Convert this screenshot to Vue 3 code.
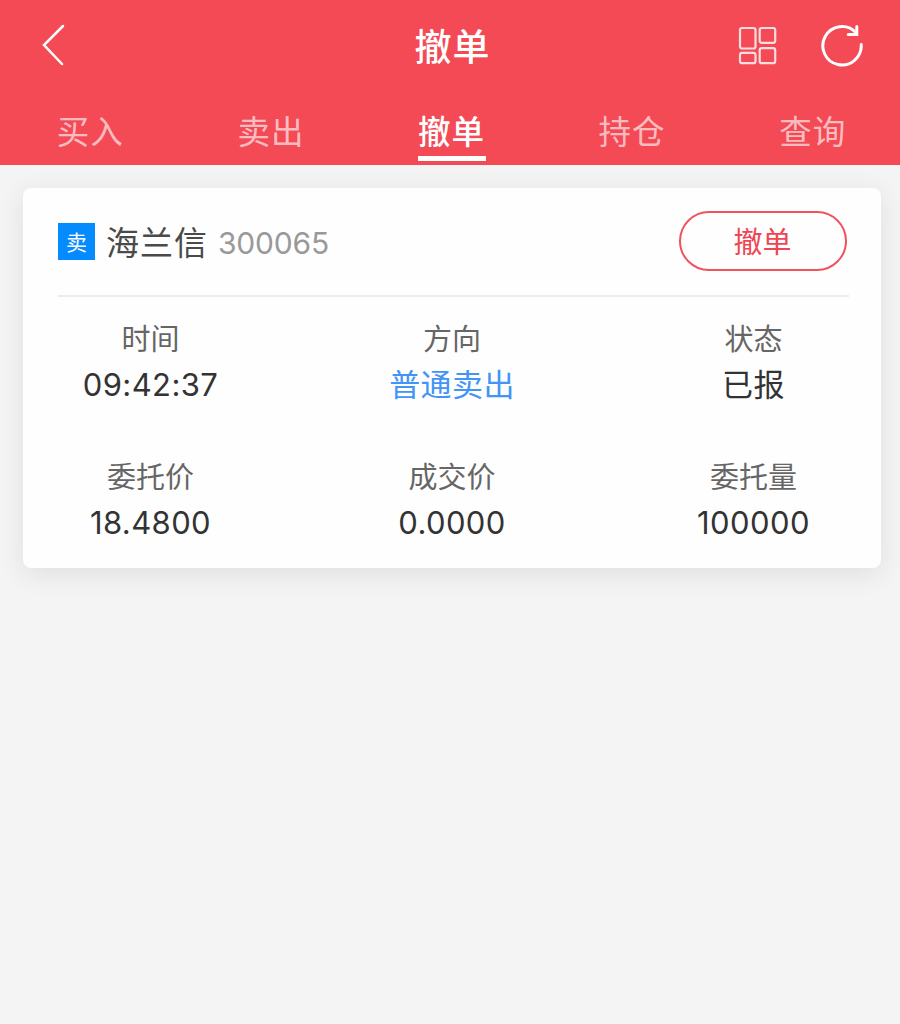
<template>
  <div class="trade-page">
    <header class="page-header">
      <div class="title-bar">
        <button class="icon-btn back" aria-label="返回">
          <svg width="24" height="42" viewBox="0 0 24 42">
            <path d="M22 2 L3 21 L21 40" />
          </svg>
        </button>
        <h1 class="title">撤单</h1>
        <div class="actions">
          <button class="icon-btn grid" aria-label="菜单">
            <svg width="40" height="40" viewBox="0 0 40 40">
              <rect x="2" y="3" width="15.5" height="20.5" rx="2" />
              <rect x="21.7" y="3" width="15.5" height="14.8" rx="2" />
              <rect x="2" y="27.8" width="15.5" height="10.4" rx="2" />
              <rect x="21.7" y="23.2" width="15.5" height="15" rx="2" />
            </svg>
          </button>
          <button class="icon-btn refresh" aria-label="刷新">
            <svg width="44" height="44" viewBox="0 0 44 44">
              <path d="M41.2 21.5 A19.2 19.2 0 1 1 35.6 9.2" />
              <path d="M36.8 3.5 V11.5 H28.2" />
            </svg>
          </button>
        </div>
      </div>

      <nav class="tabs">
        <a
          v-for="tab in tabs"
          :key="tab.id"
          class="tab"
          :class="{ active: activeTab === tab.id }"
          @click="activeTab = tab.id"
        >
          <span class="tab-text">{{ tab.name }}</span>
        </a>
      </nav>
    </header>

    <main class="content">
      <section v-for="order in orders" :key="order.code" class="order-card">
        <div class="order-head">
          <span class="badge">{{ order.side }}</span>
          <span class="stock-name">{{ order.name }}</span>
          <span class="stock-code">{{ order.code }}</span>
          <button class="cancel-btn">撤单</button>
        </div>
        <div class="order-fields">
          <div v-for="field in order.fields" :key="field.label" class="field">
            <span class="label">{{ field.label }}</span>
            <span class="value" :class="{ sell: field.sell }">{{ field.value }}</span>
          </div>
        </div>
      </section>
    </main>
  </div>
</template>

<script setup>
import { ref } from 'vue';

const activeTab = ref('cancel');

const tabs = [
  { id: 'buy', name: '买入' },
  { id: 'sell', name: '卖出' },
  { id: 'cancel', name: '撤单' },
  { id: 'position', name: '持仓' },
  { id: 'query', name: '查询' }
];

const orders = [
  {
    side: '卖',
    name: '海兰信',
    code: '300065',
    fields: [
      { label: '时间', value: '09:42:37' },
      { label: '方向', value: '普通卖出', sell: true },
      { label: '状态', value: '已报' },
      { label: '委托价', value: '18.4800' },
      { label: '成交价', value: '0.0000' },
      { label: '委托量', value: '100000' }
    ]
  }
];
</script>

<style>
body {
  background-color: #f4f4f4;
}
</style>

<style scoped>
.trade-page {
  min-height: 1024px;
  background-color: #f4f4f4;
  font-family: Inter, "Noto Sans CJK SC", sans-serif;
}

.page-header {
  height: 165px;
  background-color: #f34a56;
  color: #fff;
}

.title-bar {
  display: grid;
  grid-template-columns: 1fr auto 1fr;
  align-items: center;
  height: 90px;
  padding: 0 36px 0 41px;
}

.title {
  margin: 0;
  padding-top: 6px;
  font-size: 37px;
  line-height: 54px;
  font-weight: 500;
  letter-spacing: 1px;
}

.actions {
  display: flex;
  justify-content: flex-end;
  align-items: center;
  gap: 42px;
}

.icon-btn {
  padding: 0;
  border: none;
  background: none;
}

.icon-btn svg {
  display: block;
  fill: none;
  stroke: #fff;
  stroke-linecap: round;
}

.back {
  justify-self: start;
}

.back svg {
  stroke-width: 2.5;
}

.grid svg {
  stroke-width: 2.2;
  opacity: 0.82;
}

.refresh svg {
  stroke-width: 3;
}

.tabs {
  display: flex;
  height: 75px;
  margin: 0 -3px 0 0;
}

.tab {
  flex: 1;
  display: flex;
  justify-content: center;
  color: rgba(255, 255, 255, 0.65);
  cursor: pointer;
}

.tab-text {
  height: 66px;
  font-size: 32.5px;
  line-height: 86px;
  letter-spacing: 1px;
}

.tab.active .tab-text {
  padding-right: 1px;
  margin-left: 1px;
  border-bottom: 5px solid #fff;
  color: #fff;
  font-weight: 500;
}

.content {
  padding: 23px 19px 0 23px;
}

.order-card {
  height: 380px;
  box-sizing: border-box;
  padding: 0 32px 0 35px;
  border-radius: 8px;
  background-color: #fefefe;
  box-shadow: 0 6px 28px rgba(0, 0, 0, 0.09);
}

.order-head {
  display: flex;
  align-items: center;
  height: 106px;
  padding-top: 1px;
  border-bottom: 2px solid #ececec;
}

.badge {
  width: 37px;
  height: 37px;
  margin-bottom: 1px;
  background-color: #038bff;
  color: #fff;
  font-size: 21px;
  line-height: 39px;
  text-align: center;
}

.stock-name {
  margin: 0 0 3px 11px;
  color: #4a4a4a;
  font-size: 33px;
  letter-spacing: 1px;
}

.stock-code {
  margin: 2px 0 0 10px;
  color: #999;
  font-size: 30px;
  letter-spacing: -0.2px;
}

.cancel-btn {
  width: 168px;
  height: 60px;
  margin: 0 2px 2px auto;
  padding: 0 1px 2px 0;
  border: 2px solid #f0525e;
  border-radius: 30px;
  background: none;
  color: #ee4653;
  font-family: inherit;
  font-size: 29px;
}

.order-fields {
  display: grid;
  grid-template-columns: 185px 1fr 185px;
  row-gap: 49px;
  padding: 20px 3px 0 0;
}

.field {
  display: flex;
  flex-direction: column;
  align-items: center;
}

.label {
  color: #666;
  font-size: 29px;
  line-height: 46px;
}

.value {
  color: #333;
  font-size: 31px;
  line-height: 43px;
  letter-spacing: 0.4px;
}

.value.sell {
  color: #4294f7;
}
</style>
